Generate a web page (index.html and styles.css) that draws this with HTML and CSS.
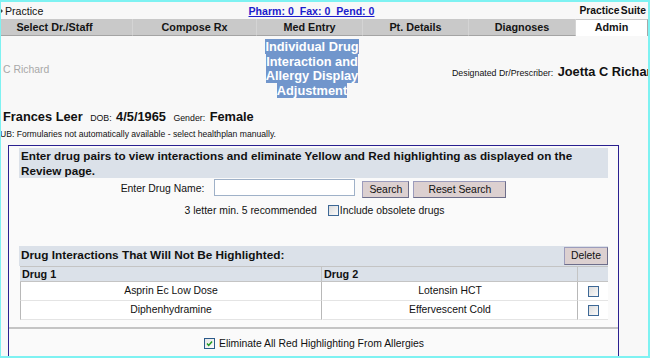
FILE: index.html
```html
<!DOCTYPE html>
<html>
<head>
<meta charset="utf-8">
<link rel="stylesheet" href="styles.css">
</head>
<body>
<div class="frame">
  <div class="topbar">
    <div class="tb-left"><span class="clip-arrow"></span><span>Practice</span></div>
    <a class="tb-link" href="#">Pharm: 0&nbsp; Fax: 0&nbsp; Pend: 0</a>
    <div class="tb-right">Practice Suite</div>
  </div>
  <div class="tabs">
    <div class="tab tab-first">Select Dr./Staff</div>
    <div class="tab">Compose Rx</div>
    <div class="tab">Med Entry</div>
    <div class="tab">Pt. Details</div>
    <div class="tab">Diagnoses</div>
    <div class="tab tab-active">Admin</div>
  </div>
  <div class="content">
    <div class="header">
      <div class="user">C Richard</div>
      <div class="title"><span class="sel">Individual Drug Interaction and Allergy Display Adjustment</span></div>
      <div class="prescriber"><span class="lbl">Designated Dr/Prescriber:</span> <span class="big">Joetta C Richard</span></div>
    </div>
    <div class="patient">
      <span class="big">Frances Leer</span>
      <span class="lbl">DOB:</span> <span class="big">4/5/1965</span>
      <span class="lbl">Gender:</span> <span class="big">Female</span>
    </div>
    <div class="note">UB: Formularies not automatically available - select healthplan manually.</div>
    <div class="box">
      <div class="bar bar-intro">Enter drug pairs to view interactions and eliminate Yellow and Red highlighting as displayed on the Review page.</div>
      <div class="search-row">
        <span class="lbl-r">Enter Drug Name:</span>
        <span class="input"></span>
        <span class="btn btn-search">Search</span>
        <span class="btn btn-reset">Reset Search</span>
      </div>
      <div class="hint-row">
        <span>3 letter min. 5 recommended</span>
        <span class="cb"></span><span>Include obsolete drugs</span>
      </div>
      <div class="bar bar-list">
        <span class="bar-title">Drug Interactions That Will Not Be Highlighted:</span>
        <span class="btn btn-del">Delete</span>
      </div>
      <div class="tbl">
        <div class="th">Drug 1</div>
        <div class="th">Drug 2</div>
        <div class="th th-last"></div>
        <div class="td">Asprin Ec Low Dose</div>
        <div class="td">Lotensin HCT</div>
        <div class="td td-cb"><span class="cb"></span></div>
        <div class="td">Diphenhydramine</div>
        <div class="td">Effervescent Cold</div>
        <div class="td td-cb"><span class="cb"></span></div>
      </div>
      <div class="rule"></div>
      <div class="check-row">
        <span class="cb cb-on"><svg viewBox="0 0 11 11" width="11" height="11"><path d="M2.5 5.5 L4.5 7.8 L8.6 3" fill="none" stroke="#1f9a1f" stroke-width="1.8"/></svg></span>
        <span>Eliminate All Red Highlighting From Allergies</span>
      </div>
    </div>
  </div>
</div>
</body>
</html>
```
FILE: styles.css
```css
* { box-sizing: border-box; }
html, body { margin: 0; padding: 0; }
body {
  font-family: "Liberation Sans", Arial, sans-serif;
  background: #f8f8f8;
  color: #111;
}
.frame {
  width: 650px;
  height: 358px;
  overflow: hidden;
  border-top: 2px solid #7ef2f2;
  border-left: 1px solid #7ef2f2;
  border-right: 2px solid #7ef2f2;
  border-bottom: 2px solid #7ef2f2;
  background: #f8f8f8;
}
.topbar {
  height: 17px;
  display: grid;
  grid-template-columns: 1fr auto 1fr;
  align-items: center;
  font-size: 10.6px;
}
.tb-left { white-space: nowrap; display: flex; align-items: center; }
.clip-arrow {
  display: inline-block;
  width: 0;
  height: 0;
  border-left: 2px solid #444;
  border-top: 2px solid transparent;
  border-bottom: 2px solid transparent;
  margin-right: 2px;
  margin-top: 1px;
}
.tb-link {
  color: #1c1ccc;
  font-weight: bold;
  font-size: 10.6px;
  text-decoration: underline;
  margin-left: -26px;
}
.tb-right { text-align: right; font-weight: bold; font-size: 10.3px; padding-right: 2px; word-spacing: -1.5px; }
.tabs {
  display: grid;
  grid-template-columns: 132px 124px 106px 106px 107px 1fr;
  height: 17px;
}
.tab {
  background: #c9c9c9;
  border-bottom: 1px solid #a4a4a4;
  border-right: 1px solid #d4d4d4;
  font-weight: bold;
  font-size: 10.8px;
  text-align: center;
  line-height: 16px;
  color: #151515;
}
.tab-first { padding-right: 24px; }
.tab-active {
  background: #fff;
  border-bottom: none;
  border-right: 1px solid #a8a8a8;
  border-top: 1px solid #c9c9c9;
  line-height: 15px;
}
.content { padding-top: 4px; }
.header {
  display: grid;
  grid-template-columns: 261px 100px 1fr;
  align-items: center;
}
.user { color: #a8a8a8; font-size: 10.4px; padding-left: 2px; padding-top: 1px; }
.title {
  text-align: center;
  font-weight: bold;
  font-size: 12.8px;
  line-height: 14.5px;
}
.sel {
  background: #7196cc;
  color: #fff;
}
.prescriber {
  white-space: nowrap;
  padding-left: 90px;
  padding-top: 3px;
}
.lbl { font-size: 8.8px; }
.big { font-weight: bold; font-size: 12.8px; }
.patient { margin-top: 9px; padding-left: 2px; white-space: nowrap; }
.patient .lbl { margin-left: 3px; }
.note { font-size: 8.6px; margin-top: 4px; margin-left: -1px; white-space: nowrap; }
.box {
  margin-top: 6px;
  margin-left: 7px;
  width: 611px;
  border: 1px solid #2a2090;
  border-bottom: none;
  background: #fafafa;
  padding: 2px 10px 10px;
  height: 240px;
}
.bar { background: #dbe1e9; }
.bar-intro {
  font-weight: bold;
  font-size: 11.7px;
  line-height: 15px;
  padding: 0 2px;
  height: 30px;
}
.search-row {
  display: flex;
  justify-content: center;
  align-items: flex-start;
  font-size: 10.4px;
  height: 20px;
  margin-top: 1px;
}
.lbl-r { margin-right: 10px; margin-top: 4px; line-height: 12px; }
.input {
  width: 141px;
  height: 17px;
  background: #fff;
  border: 1px solid #9fb1c8;
}
.btn {
  display: inline-block;
  background: #dcd0d0;
  border: 1px solid #9c9cbc;
  border-right-color: #6e6e8a;
  border-bottom-color: #6e6e8a;
  font-size: 10.4px;
  height: 17px;
  line-height: 15px;
  text-align: center;
}
.btn-search { width: 47px; margin-left: 7px; margin-top: 2px; }
.btn-reset { width: 93px; margin-left: 4px; margin-top: 2px; }
.hint-row {
  display: flex;
  justify-content: center;
  align-items: center;
  font-size: 10.4px;
  height: 22px;
  padding-left: 2px;
}
.cb {
  display: inline-block;
  width: 11px;
  height: 11px;
  border: 1px solid #3d6896;
  background: linear-gradient(135deg, #dcdcdc, #fafafa);
}
.hint-row .cb { margin-left: 11px; margin-right: 1px; }
.bar-list {
  margin-top: 25px;
  height: 20px;
  display: flex;
  justify-content: space-between;
  align-items: flex-start;
}
.bar-title { font-weight: bold; font-size: 11.8px; padding-left: 2px; line-height: 18px; }
.btn-del { width: 44px; height: 18px; line-height: 16px; margin-top: 1px; }
.tbl {
  display: grid;
  grid-template-columns: 302px 256px 1fr;
  margin-left: 1px;
  font-size: 10.4px;
}
.th {
  background: #dbe1e9;
  font-weight: bold;
  font-size: 10.8px;
  height: 16px;
  line-height: 15px;
  padding-left: 2px;
  border-top: 1px solid #c4c4c4;
  border-bottom: 1px solid #c4c4c4;
  border-right: 1px solid #c4c4c4;
}
.th-last { border-right: none; }
.td {
  background: #fff;
  height: 19px;
  line-height: 18px;
  text-align: center;
  border-right: 1px solid #b8b8b8;
  border-bottom: 1px solid #e4e4e4;
  border-left: 1px solid transparent;
}
.td:nth-child(3n+1) { border-left: 1px solid #b8b8b8; }
.td-cb { border-right: none; display: flex; align-items: center; justify-content: center; }
.rule {
  margin: 7px -10px 0;
  height: 2px;
  background: #c4c4c4;
}
.check-row {
  display: flex;
  justify-content: center;
  align-items: center;
  font-size: 10.4px;
  margin-top: 9px;
  padding-left: 1px;
}
.cb-on {
  display: inline-flex;
  align-items: center;
  justify-content: center;
  margin-right: 4px;
  border-color: #2a5a8a;
  background: linear-gradient(135deg, #e4e4e4, #fcfcfc);
}
.cb-on svg { width: 9px; height: 9px; }
```
